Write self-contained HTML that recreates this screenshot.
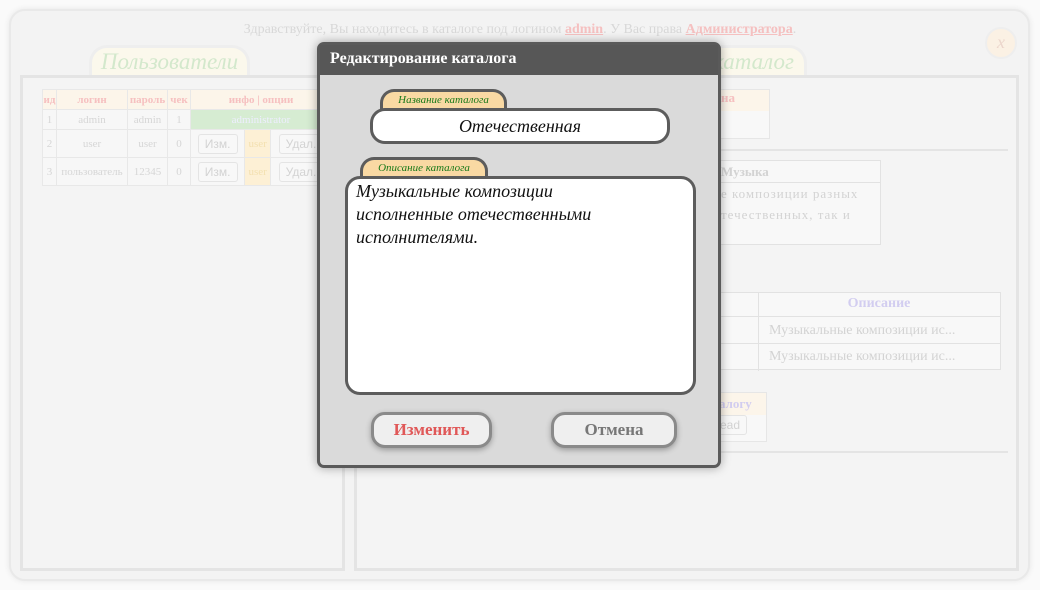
<!DOCTYPE html>
<html><head><meta charset="utf-8"><style>
*{margin:0;padding:0;box-sizing:border-box}
body{width:1040px;height:590px;background:#fafafa;font-family:"Liberation Serif",serif;position:relative;overflow:hidden}
.a{position:absolute}
.outer{left:9px;top:9px;width:1021px;height:572px;background:#f3f3f3;border:2px solid #e9e9e9;border-radius:16px;box-shadow:0 0 6px #e6e6e6}
.box{border:3px solid #e4e4e4;background:#f4f4f4}
.tab{border:3px solid #eee;border-bottom:none;border-radius:18px 18px 0 0;background:#fbf8ec;font-style:italic;color:#d3e8cc;font-size:23px;text-align:center;line-height:28px}
table{border-collapse:collapse;font-size:11px;color:#d6d6d6}
td{border:1px solid #e8e8e8;text-align:center;background:#f7f7f7;height:20px}
.th td{color:#f6c0c0;font-weight:bold;background:#fcf5ea}
.btn{display:inline-block;border:1px solid #e4e4e4;border-radius:3px;padding:2px 6px;font-family:"Liberation Sans",sans-serif;font-size:12px;color:#d3d3d3;background:#f8f8f8}
.modal{left:317px;top:42px;width:404px;height:426px;background:#dadada;border:3px solid #5a5a5a;border-radius:7px;box-shadow:0 0 10px rgba(0,0,0,.35)}
.mh{height:30px;background:#575757;color:#fff;font-weight:bold;font-size:16px;line-height:28px;padding-left:10px}
.lbl{background:#f9d9a3;border:3px solid #5c5c5c;border-bottom:none;border-radius:14px 14px 0 0;font-style:italic;color:#1a7a1a;font-size:11px;text-align:center;line-height:17px;font-family:"Liberation Serif",serif}
.inp{background:#fff;border:3px solid #5c5c5c;font-style:italic;color:#111;font-family:"Liberation Serif",serif}
.mb{border:3px solid #8a8a8a;border-radius:14px;background:#efefef;font-weight:bold;font-size:17px;text-align:center;line-height:29px;box-shadow:0 2px 6px rgba(0,0,0,.3)}
</style></head><body>
<div class="a outer"></div>
<div class="a" style="left:0;top:22px;width:1040px;text-align:center;font-size:14px;color:#d8d8d8">Здравствуйте, Вы находитесь в каталоге под логином <b style="color:#f5c0c0;text-decoration:underline">admin</b>. У Вас права <b style="color:#f5c0c0;text-decoration:underline">Администратора</b>.</div>
<div class="a" style="left:985px;top:27px;width:32px;height:32px;border-radius:50%;background:#fbf1e4;border:2px solid #eee;color:#ecd6cc;font-style:italic;font-size:18px;text-align:center;line-height:26px">x</div>
<div class="a tab" style="left:89px;top:45px;width:161px;height:31px">Пользователи</div>
<div class="a tab" style="left:700px;top:45px;width:107px;height:31px">каталог</div>
<div class="a box" style="left:20px;top:75px;width:325px;height:496px"></div>
<div class="a box" style="left:354px;top:75px;width:665px;height:496px"></div>
<table class="a" style="left:42px;top:89px;width:290px">
<tr class="th"><td style="width:14px">ид</td><td style="width:71px">логин</td><td style="width:40px">пароль</td><td style="width:23px">чек</td><td colspan="3">инфо | опции</td></tr>
<tr><td>1</td><td>admin</td><td>admin</td><td>1</td><td colspan="3" style="background:#d6ecd2;color:#eef">administrator</td></tr>
<tr style="height:28px"><td>2</td><td>user</td><td>user</td><td>0</td><td><span class="btn">Изм.</span></td><td style="background:#fdf0d5;color:#f3e0b0">user</td><td><span class="btn">Удал.</span></td></tr>
<tr style="height:28px"><td>3</td><td>пользователь</td><td>12345</td><td>0</td><td><span class="btn">Изм.</span></td><td style="background:#fdf0d5;color:#f3e0b0">user</td><td><span class="btn">Удал.</span></td></tr>
</table>
<div class="a" style="left:700px;top:89px;width:70px;height:50px;border:1px solid #e6e6e6;background:#f8f8f8"><div style="height:21px;background:#fcf5ea;color:#f6c0c0;font-weight:bold;font-size:13px;padding-left:20px">на</div></div>
<div class="a" style="left:362px;top:149px;width:646px;height:2px;background:#e4e4e4"></div>
<div class="a" style="left:700px;top:160px;width:181px;height:85px;border:1px solid #e2e2e2;background:#f8f8f8;color:#d3d3d3;font-size:13px"><div style="height:22px;border-bottom:1px solid #e2e2e2;font-weight:bold;padding-left:20px;line-height:22px">Музыка</div><div style="padding-left:20px;line-height:21px;letter-spacing:1px">е композиции разных<br>течественных, так и</div></div>
<div class="a" style="left:700px;top:292px;width:301px;height:78px;border:1px solid #e2e2e2;background:#f8f8f8;font-size:14px;color:#d3d3d3">
<div style="position:absolute;left:57px;top:0;width:1px;height:78px;background:#e2e2e2"></div>
<div style="height:24px;border-bottom:1px solid #e2e2e2;color:#d2cdf0;font-weight:bold;text-align:center;padding-left:57px;line-height:22px">Описание</div>
<div style="height:27px;border-bottom:1px solid #e2e2e2;padding-left:68px;line-height:27px">Музыкальные композиции ис...</div>
<div style="height:26px;padding-left:68px;line-height:26px">Музыкальные композиции ис...</div></div>
<div class="a" style="left:700px;top:392px;width:67px;height:50px;border:1px solid #e6e6e6;background:#f8f8f8"><div style="height:22px;background:#fcf5ea;color:#d2cdf0;font-weight:bold;font-size:13px;padding-left:18px;line-height:22px">алогу</div><span class="btn" style="margin-left:12px">ead</span></div>
<div class="a" style="left:362px;top:451px;width:646px;height:2px;background:#e4e4e4"></div>

<div class="a modal">
<div class="mh">Редактирование каталога</div>
<div class="a lbl" style="left:60px;top:44px;width:127px;height:20px">Название каталога</div>
<div class="a inp" style="left:50px;top:63px;width:300px;height:36px;border-radius:15px;text-align:center;font-size:18px;line-height:30px">Отечественная</div>
<div class="a lbl" style="left:40px;top:112px;width:128px;height:20px">Описание каталога</div>
<div class="a inp" style="left:25px;top:131px;width:351px;height:219px;border-radius:15px;font-size:18px;line-height:23px;padding:1px 8px">Музыкальные композиции<br>исполненные отечественными<br>исполнителями.</div>
<div class="a mb" style="left:51px;top:367px;width:121px;height:36px;color:#e05858">Изменить</div>
<div class="a mb" style="left:231px;top:367px;width:126px;height:36px;color:#777">Отмена</div>
</div>
</body></html>
